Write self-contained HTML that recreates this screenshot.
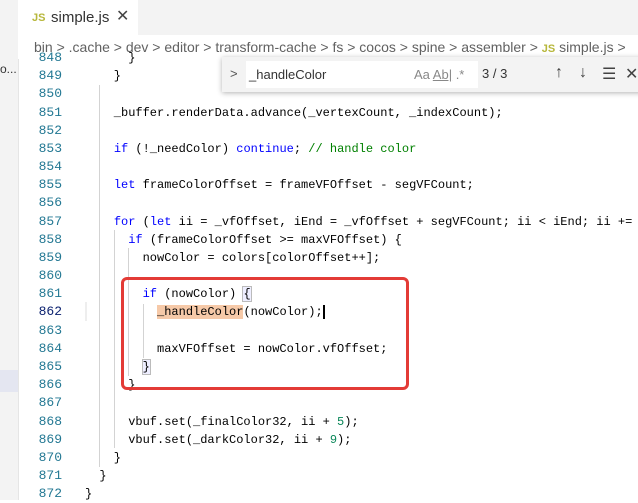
<!DOCTYPE html>
<html><head><style>
body{margin:0;width:638px;height:500px;overflow:hidden;background:#fff;font-family:"Liberation Sans",sans-serif;position:relative}
.side{position:absolute;left:0;top:0;width:18px;height:500px;background:#f3f3f3;border-right:1px solid #e5e5e5}
.tabbar{position:absolute;left:18px;top:0;right:0;height:35px;background:#f3f3f3}
.tab{position:absolute;left:18px;top:0;width:120px;height:35px;background:#fff;font-size:15px;color:#333}
.bc{position:absolute;left:18px;top:35px;right:0;height:24px;background:#fff;font-size:14px;color:#616161;white-space:nowrap;line-height:24px;padding-left:16px}
.js{color:#b7b73b;font-weight:bold;font-size:11px}
.code{position:absolute;left:0;top:0;font-family:"Liberation Mono",monospace;font-size:12px}
.ln{position:absolute;left:18px;width:44px;text-align:right;color:#237893;height:18.17px;line-height:18.17px;font-size:13px}
.l{position:absolute;left:85px;white-space:pre;height:18.17px;line-height:18.17px;color:#000}
.k{color:#0000ff}.c{color:#008000}
.g{position:absolute;width:1px;background:#d3d3d3}
.ic{position:absolute;top:7px;font-size:16px;color:#424242}
</style></head><body>
<div class="side"><div style="position:absolute;top:62px;left:0;font-size:12px;color:#333">o...</div><div style="position:absolute;top:370px;left:0;width:18px;height:22px;background:#e4e6f1"></div></div>
<div class="tabbar"></div>
<div class="tab"><span class="js" style="position:absolute;left:14px;top:12px">JS</span><span style="position:absolute;left:33px;top:9px">simple.js</span><span style="position:absolute;left:98px;top:6px;font-size:16px;color:#444">✕</span></div>
<div class="bc">bin &gt; .cache &gt; dev &gt; editor &gt; transform-cache &gt; fs &gt; cocos &gt; spine &gt; assembler &gt; <span class="js">JS</span> simple.js &gt;</div>
<div class="code">
<div class="g" style="left:99px;top:85px;height:382px"></div>
<div class="g" style="left:114px;top:230px;height:218px"></div>
<div class="g" style="left:128px;top:248px;height:128px"></div>
<div class="g" style="left:143px;top:304px;height:54px"></div>
<div style="position:absolute;left:85px;right:0;top:302px;height:19px;border:1px solid #eee;box-sizing:border-box"></div>
<div class="ln" style="top:49px">848</div><div class="l" style="top:49px">      }</div>
<div class="ln" style="top:67px">849</div><div class="l" style="top:67px">    }</div>
<div class="ln" style="top:85.3px">850</div>
<div class="ln" style="top:103.5px">851</div><div class="l" style="top:103.5px">    _buffer.renderData.advance(_vertexCount, _indexCount);</div>
<div class="ln" style="top:121.7px">852</div>
<div class="ln" style="top:139.9px">853</div><div class="l" style="top:139.9px">    <span class="k">if</span> (!_needColor) <span class="k">continue</span>; <span class="c">// handle color</span></div>
<div class="ln" style="top:158px">854</div>
<div class="ln" style="top:176.2px">855</div><div class="l" style="top:176.2px">    <span class="k">let</span> frameColorOffset = frameVFOffset - segVFCount;</div>
<div class="ln" style="top:194.4px">856</div>
<div class="ln" style="top:212.6px">857</div><div class="l" style="top:212.6px">    <span class="k">for</span> (<span class="k">let</span> ii = _vfOffset, iEnd = _vfOffset + segVFCount; ii &lt; iEnd; ii +=</div>
<div class="ln" style="top:230.7px">858</div><div class="l" style="top:230.7px">      <span class="k">if</span> (frameColorOffset &gt;= maxVFOffset) {</div>
<div class="ln" style="top:248.9px">859</div><div class="l" style="top:248.9px">        nowColor = colors[colorOffset++];</div>
<div class="ln" style="top:267.1px">860</div>
<div class="ln" style="top:285.3px">861</div><div class="l" style="top:285.3px">        <span class="k">if</span> (nowColor) <span style="outline:1px solid #bbb;background:#eef">{</span></div>
<div class="ln" style="top:303.4px;color:#0b216f">862</div><div class="l" style="top:303.4px">          <span style="background:#f6c9a8">_handleColor</span>(nowColor);<span style="border-left:2px solid #000"></span></div>
<div class="ln" style="top:321.6px">863</div>
<div class="ln" style="top:339.8px">864</div><div class="l" style="top:339.8px">          maxVFOffset = nowColor.vfOffset;</div>
<div class="ln" style="top:358px">865</div><div class="l" style="top:358px">        <span style="outline:1px solid #bbb;background:#eef">}</span></div>
<div class="ln" style="top:376.1px">866</div><div class="l" style="top:376.1px">      }</div>
<div class="ln" style="top:394.3px">867</div>
<div class="ln" style="top:412.5px">868</div><div class="l" style="top:412.5px">      vbuf.set(_finalColor32, ii + <span style="color:#098658">5</span>);</div>
<div class="ln" style="top:430.7px">869</div><div class="l" style="top:430.7px">      vbuf.set(_darkColor32, ii + <span style="color:#098658">9</span>);</div>
<div class="ln" style="top:448.8px">870</div><div class="l" style="top:448.8px">    }</div>
<div class="ln" style="top:467px">871</div><div class="l" style="top:467px">  }</div>
<div class="ln" style="top:485.2px">872</div><div class="l" style="top:485.2px">}</div>
</div>
<div style="position:absolute;left:121px;top:277px;width:288px;height:113px;border:3px solid #e33b36;border-radius:6px;box-sizing:border-box"></div>
<div style="position:absolute;left:222px;top:57px;width:430px;height:35px;background:#f3f3f3;box-shadow:0 1px 5px rgba(0,0,0,.3);font-size:13px;color:#333">
<span style="position:absolute;left:8px;top:9px;color:#555">&gt;</span>
<div style="position:absolute;left:24px;top:4px;width:232px;height:27px;background:#fff"><span style="position:absolute;left:3px;top:6px">_handleColor</span><span style="position:absolute;left:168px;top:6px;color:#888">Aa <u>Ab|</u> .*</span></div>
<span style="position:absolute;left:260px;top:9px">3 / 3</span>
<span class="ic" style="left:333px">↑</span><span class="ic" style="left:357px">↓</span><span class="ic" style="left:380px">☰</span><span class="ic" style="left:403px">✕</span>
</div>
</body></html>
